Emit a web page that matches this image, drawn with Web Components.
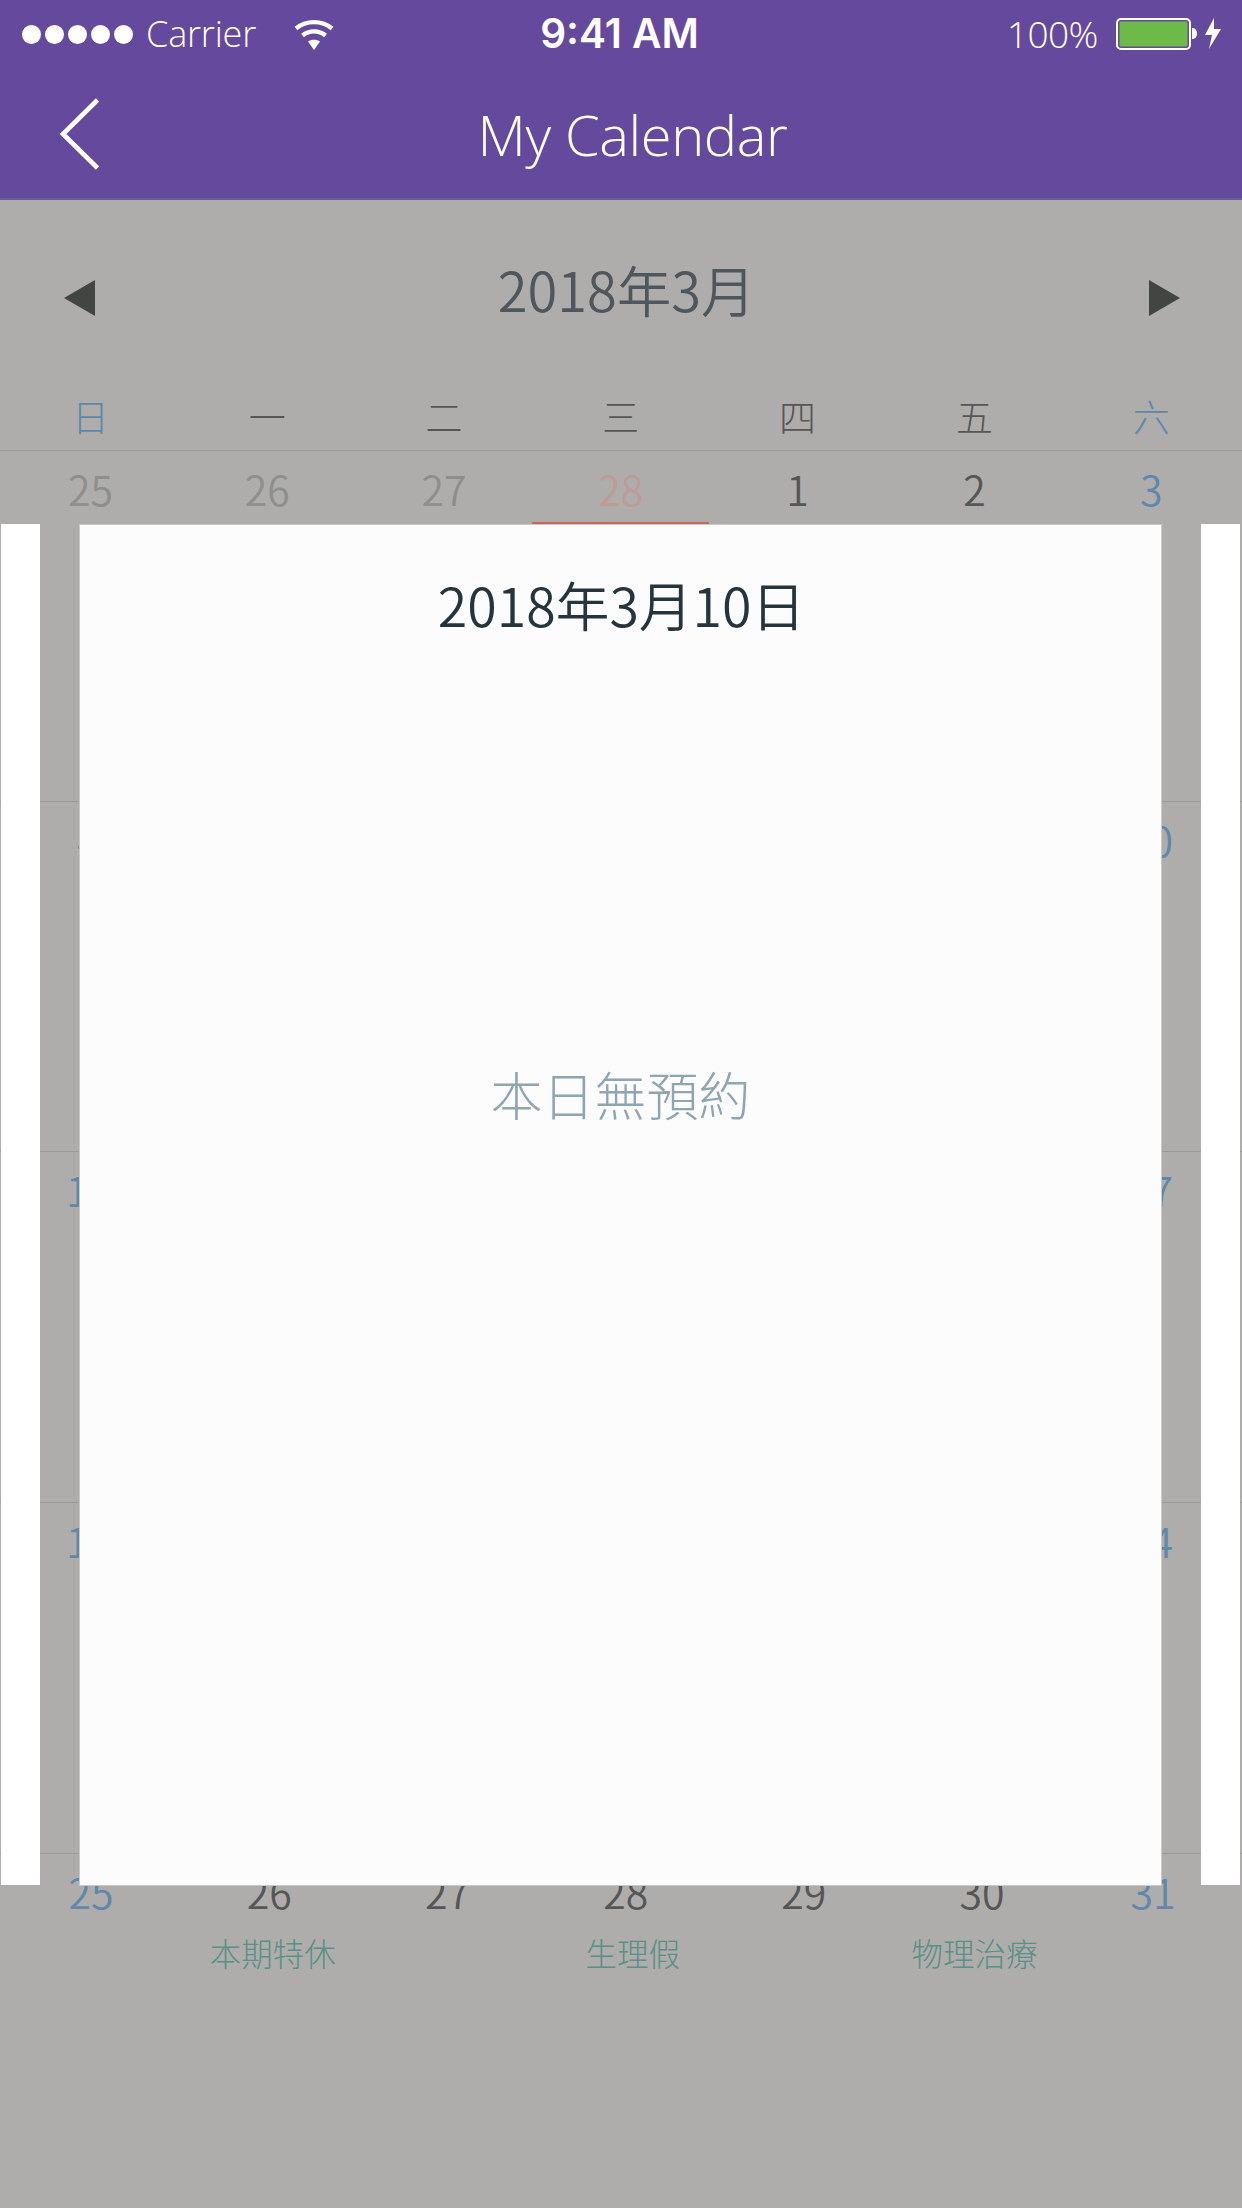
<!DOCTYPE html>
<html lang="zh-Hant">
<head>
<meta charset="utf-8">
<title>My Calendar</title>
<style>
  html, body { margin: 0; padding: 0; background: #aeadab; }
  body { width: 1242px; height: 2208px; overflow: hidden; position: relative; font-family: "Noto Sans CJK TC", "Noto Sans", sans-serif; }
</style>
</head>
<body>
<app-header heading="My Calendar"></app-header>
<cal-month label="2018年3月"></cal-month>
<cal-weekdays></cal-weekdays>
<cal-grid></cal-grid>
<day-carousel date="2018年3月10日" empty="本日無預約"></day-carousel>

<script>
const FONT_CJK = '"Noto Sans CJK TC", "Noto Sans", sans-serif';

class AppHeader extends HTMLElement {
  connectedCallback() {
    const root = this.attachShadow({ mode: 'open' });
    root.innerHTML = `
    <style>
      :host { display: block; height: 200px; box-sizing: border-box; background: #65499c; border-bottom: 2px solid #6b5d92; color: #fff; font-family: "Open Sans", sans-serif; }
      .status { height: 66px; display: grid; grid-template-columns: 1fr auto 1fr; align-items: center; }
      .left, .right { display: flex; align-items: center; }
      .left { padding-left: 22px; padding-top: 1px; }
      .dots { display: flex; gap: 4px; }
      .dots i { width: 19px; height: 19px; border-radius: 50%; background: #fff; display: block; }
      .carrier { font-size: 36px; font-weight: 350; margin-left: 13px; line-height: 66px; letter-spacing: -.2px; }
      .wifi { margin-left: 38px; display: block; }
      .time { font-family: Inter, Roboto, sans-serif; font-weight: 600; font-size: 40.5px; line-height: 66px; margin-left: -3px; }
      .right { justify-content: flex-end; padding-right: 20px; }
      .pct { font-size: 37px; font-weight: 350; line-height: 66px; margin-right: 18px; letter-spacing: -.5px; }
      .nav { height: 132px; display: grid; grid-template-columns: 1fr auto 1fr; align-items: center; }
      .back { display: block; margin-left: 59px; margin-top: 2px; }
      h1 { margin: 0; font-size: 56px; font-weight: 350; line-height: 132px; letter-spacing: -.4px; padding-left: 23px; padding-top: 2px; }
    </style>
    <div class="status">
      <div class="left">
        <span class="dots"><i></i><i></i><i></i><i></i><i></i></span>
        <span class="carrier">Carrier</span>
        <svg class="wifi" width="40" height="31" viewBox="0 0 40 31" fill="none" stroke="#fff" stroke-width="4.4">
          <path d="M2 9.5C12 1 28 1 38 9.5"/>
          <path d="M8.5 16.5C15 11 25 11 31.5 16.5"/>
          <path d="M14 22.6 20 31l6-8.4c-3.6-2.6-8.400-2.600-12 0z" fill="#fff" stroke="none"/>
        </svg>
      </div>
      <div class="time">9:41 AM</div>
      <div class="right">
        <span class="pct">100%</span>
        <svg width="106" height="32" viewBox="0 0 106 32">
          <rect x="1" y="1" width="73" height="30" rx="4" fill="none" stroke="#fff" stroke-width="2"/>
          <rect x="3.500" y="3.500" width="68" height="25" rx="1.500" fill="#6cbb48"/>
          <path d="M76 10c3.500 0 5 2.500 5 5.500S79.500 21 76 21z" fill="#fff"/>
          <path d="M98 0 89 17h7l-3 14 12-20h-7z" fill="#fff"/>
        </svg>
      </div>
    </div>
    <div class="nav">
      <svg class="back" width="42" height="72" viewBox="0 0 42 72" fill="none" stroke="#fff" stroke-width="4.600">
        <path d="M38.500 2 4 36 38.500 70"/>
      </svg>
      <h1>${this.getAttribute('heading')}</h1>
      <span></span>
    </div>`;
  }
}

class CalMonth extends HTMLElement {
  connectedCallback() {
    const root = this.attachShadow({ mode: 'open' });
    root.innerHTML = `
    <style>
      :host { display: flex; align-items: center; justify-content: space-between; height: 186px; box-sizing: border-box; padding: 0 62px 0 64px; font-family: ${FONT_CJK}; }
      span { font-size: 54.300px; font-weight: 350; color: #4f575c; line-height: 1; margin-bottom: 8px; margin-left: 9px; }
      svg { display: block; margin-top: 10px; }
    </style>
    <svg width="31" height="36" viewBox="0 0 31 36"><path d="M31 0V36L0 18z" fill="#434543"/></svg>
    <span>${this.getAttribute('label')}</span>
    <svg width="31" height="36" viewBox="0 0 31 36"><path d="M0 0V36L31 18z" fill="#434543"/></svg>`;
  }
}

class CalWeekdays extends HTMLElement {
  connectedCallback() {
    const root = this.attachShadow({ mode: 'open' });
    const days = ['日','一','二','三','四','五','六'];
    root.innerHTML = `
    <style>
      :host { display: grid; grid-template-columns: repeat(7, 176.8px); padding-left: 2px; height: 64px; box-sizing: border-box; font-family: ${FONT_CJK}; }
      div { text-align: center; font-size: 37px; font-weight: 300; line-height: 36px; padding-top: 12px; color: #565656; }
      .we { color: #5f88ab; }
    </style>
    ${days.map((d, i) => `<div class="${i === 0 || i === 6 ? 'we' : ''}">${d}</div>`).join('')}`;
  }
}

class CalCell extends HTMLElement {
  connectedCallback() {
    const root = this.attachShadow({ mode: 'open' });
    root.innerHTML = `
    <style>
      :host { display: block; position: relative; text-align: center; color: #565656; font-size: 41px; font-weight: 350; line-height: 40px; padding-top: 17px; min-width: 0; }
      :host([kind="weekend"]) { color: #5f88ab; }
      :host([kind="muted"]) { color: #8f8e8d; }
      :host([kind="today"]) { color: #c09a95; }
      :host([kind="today"])::after { content: ""; position: absolute; left: 0; right: 0; top: 71px; height: 3px; background: #c8685c; }
      .note { font-size: 31.5px; font-weight: 300; line-height: 36px; margin-top: 23px; color: #5a9087; white-space: nowrap; margin-left: var(--note-shift, 0px); }
    </style>
    <div>${this.getAttribute('n')}</div>
    ${this.hasAttribute('note') ? `<div class="note">${this.getAttribute('note')}</div>` : ''}`;
  }
}

class CalGrid extends HTMLElement {
  connectedCallback() {
    const root = this.attachShadow({ mode: 'open' });
    const rows = [
      [25,26,27,28,1,2,3],
      [4,5,6,7,8,9,10],
      [11,12,13,14,15,16,17],
      [18,19,20,21,22,23,24],
      [25,26,27,28,29,30,31]
    ];
    const notes = { 26: ['本期特休', '7px'], 28: ['生理假', '14px'], 30: ['物理治療', '-15px'] };
    const cell = (n, ri, ci) => {
      let kind = '';
      if (ri === 0 && ci < 3) kind = 'muted';
      else if (ri === 0 && ci === 3) kind = 'today';
      else if (ci === 0 || ci === 6) kind = 'weekend';
      const note = ri === 4 && notes[n];
      return `<cal-cell n="${n}" kind="${kind}" ${note ? `note="${note[0]}" style="--note-shift:${note[1]}"` : ''}></cal-cell>`;
    };
    root.innerHTML = `
    <style>
      :host { display: block; font-family: ${FONT_CJK}; }
      .row { display: grid; grid-template-columns: repeat(7, 177px); height: 350.67px; box-sizing: border-box; border-top: 1px solid #9b9a98; }
      .row:first-of-type { grid-template-columns: repeat(7, 176.8px); padding-left: 2px; }
      .row:last-of-type { grid-template-columns: repeat(6, 178.2px) 164px; padding-left: 2px; height: auto; }
    </style>
    ${rows.map((r, ri) => `<div class="row">${r.map((n, ci) => cell(n, ri, ci)).join('')}</div>`).join('')}`;
  }
}

class DayCarousel extends HTMLElement {
  connectedCallback() {
    const root = this.attachShadow({ mode: 'open' });
    root.innerHTML = `
    <style>
      :host { position: absolute; left: 1px; top: 525px; width: 1239px; height: 1360px; display: flex; gap: 40px; font-family: ${FONT_CJK}; }
      .peek { width: 39px; background: #fff; flex: none; margin-top: -1px; }
      .card { flex: 1; background: #fcfcfc; box-shadow: 0 0 0 1px #c9c9c8; display: flex; flex-direction: column; align-items: center; }
      h2 { margin: 0; font-size: 53.700px; font-weight: 350; color: #26343c; line-height: 60px; padding-top: 49px; padding-left: 2px; }
      p { margin: 0; flex: 1; display: flex; align-items: center; font-size: 52px; font-weight: 300; color: #8fa6b0; padding-bottom: 332px; box-sizing: border-box; }
    </style>
    <div class="peek"></div>
    <div class="card">
      <h2>${this.getAttribute('date')}</h2>
      <p>${this.getAttribute('empty')}</p>
    </div>
    <div class="peek"></div>`;
  }
}

customElements.define('app-header', AppHeader);
customElements.define('cal-month', CalMonth);
customElements.define('cal-weekdays', CalWeekdays);
customElements.define('cal-cell', CalCell);
customElements.define('cal-grid', CalGrid);
customElements.define('day-carousel', DayCarousel);
</script>
</body>
</html>
